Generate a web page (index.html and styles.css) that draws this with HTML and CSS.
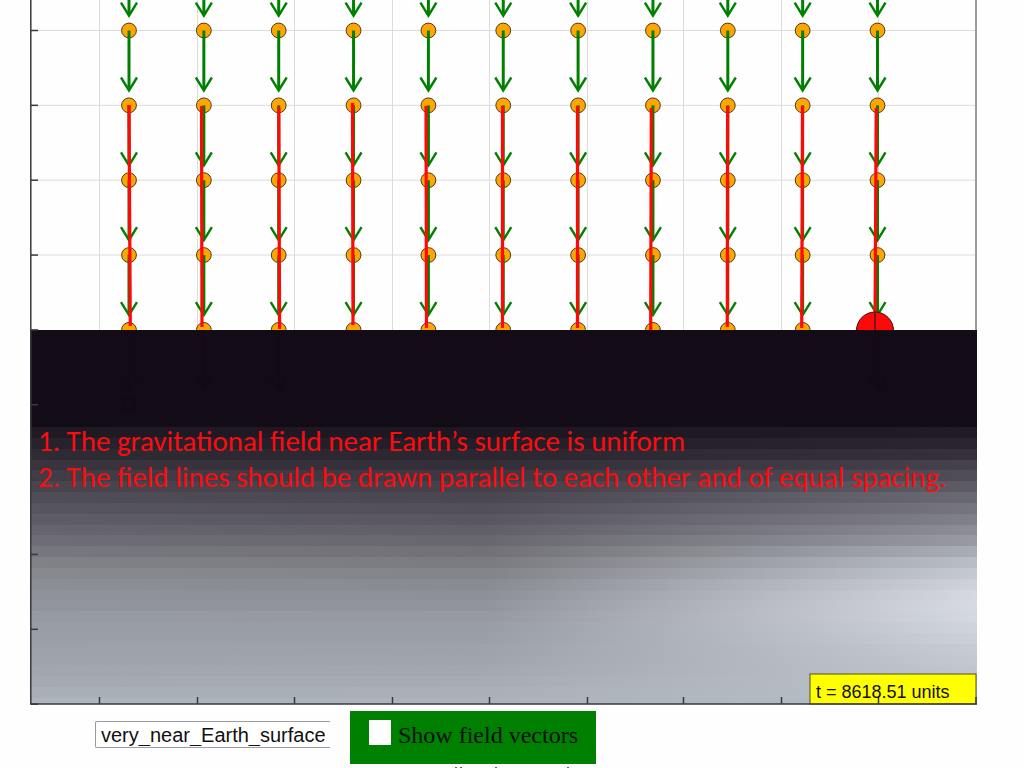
FILE: index.html
```html
<!DOCTYPE html>
<html lang="en">
<head>
<meta charset="utf-8">
<title>Gravitational field near Earth's surface</title>
<link rel="stylesheet" href="styles.css">
</head>
<body>
<main class="simulation">
  <svg class="plot" viewBox="30 0 947 705" role="img" aria-label="Gravitational field plot">
    <defs id="defs">
      <clipPath id="sky"><rect x="30" y="0" width="947" height="330"/></clipPath>
    </defs>
    <g id="grid" class="grid"></g>
    <g id="field" clip-path="url(#sky)"></g>
    <rect class="ground" x="30" y="330" width="947" height="98"/>
    <g id="bands" shape-rendering="crispEdges"></g>
    <g id="buried" class="buried"></g>
    <path class="edge" d="M976 0V330"/>
    <rect class="time-box" x="810" y="674" width="166" height="30"/>
    <g id="ticks" class="axis"></g>
    <path class="axis" d="M30.8 0V704H977"/>
    <text class="note" x="38" y="451">1. The gravitational field near Earth’s surface is uniform</text>
    <text class="note" x="38" y="487">2. The field lines should be drawn parallel to each other and of equal spacing.</text>
    <text class="time" x="816" y="698">t = 8618.51 units</text>
  </svg>
  <form class="controls">
    <select class="scenario" aria-label="Scenario">
      <option>very_near_Earth_surface</option>
    </select>
    <label class="toggle"><input class="tick" type="checkbox"><span>Show field vectors</span></label>
  </form>
  <svg class="marks" viewBox="0 0 1024 4" aria-hidden="true"><path d="M455 3.5h2M460 3.5h2M495 3.5h2M567 3.5h2"/></svg>
</main>
<script src="plot.js"></script>
</body>
</html>
```
FILE: styles.css
```css
body {
  margin: 0;
  background: #fefefe;
}

.simulation {
  overflow: hidden;
}

.plot {
  display: block;
  width: auto;
  margin: 0 47px 0 30px;
}

.grid {
  stroke: #dcdcdc;
  stroke-width: 1;
  fill: none;
}

.axis {
  stroke: #3b3840;
  stroke-width: 1.5;
  fill: none;
}

.edge {
  stroke: #9b9b9f;
  stroke-width: 2;
}

.dot {
  fill: #ffa500;
  stroke: #4b3b20;
  stroke-width: 1;
}

.shaft {
  stroke: #008000;
  stroke-width: 3;
  fill: none;
}

.head {
  stroke: #008000;
  stroke-width: 2.4;
  fill: none;
}

.trail {
  stroke: #ff0808;
  stroke-width: 3.2;
}

.ball {
  fill: #ff0808;
  stroke: #301010;
  stroke-width: 1;
}

.radius {
  stroke: #801018;
  stroke-width: 2;
}

.ground {
  fill: #130c17;
}

.buried {
  opacity: 0.35;
  stroke: #080714;
  stroke-width: 2;
  fill: none;
}

.time-box {
  fill: #ffff00;
  stroke: #55551c;
  stroke-width: 1;
}

.note {
  fill: #fa0c10;
  font: 29px Carlito, Lato, sans-serif;
}

.time {
  fill: #111111;
  font: 18px "Liberation Sans", Arial, sans-serif;
}

.controls {
  display: flex;
  align-items: center;
  gap: 20px;
  margin: 6px 0 0 95px;
}

.scenario {
  appearance: none;
  box-sizing: border-box;
  width: 235px;
  height: 27px;
  margin: 0 0 6px;
  padding: 0 0 0 5px;
  border: 1px solid #9a9aa8;
  border-right: 0;
  border-radius: 2px 0 0 2px;
  background: #ffffff;
  color: #111111;
  font: 20px "Liberation Sans", Arial, sans-serif;
}

.toggle {
  display: flex;
  align-items: center;
  gap: 7px;
  box-sizing: border-box;
  height: 53px;
  padding: 0 18px 4px 19px;
  background: #008000;
  color: #061006;
  font: 24px "Liberation Serif", "Times New Roman", serif;
}

.tick {
  appearance: none;
  width: 22px;
  height: 25px;
  margin: 0 0 6px;
  background: #ffffff;
}

.tick:checked {
  background: #222222;
}

.marks {
  display: block;
  width: 100%;
  stroke: #8a5048;
  stroke-width: 1;
}
```
FILE: plot.js
```javascript
const NS = "http://www.w3.org/2000/svg";

function add(parent, name, attrs) {
  const node = document.createElementNS(NS, name);
  for (const key in attrs) node.setAttribute(key, attrs[key]);
  parent.appendChild(node);
  return node;
}

const byId = (id) => document.getElementById(id);
const grid = byId("grid");
const ticks = byId("ticks");
const field = byId("field");
const buried = byId("buried");

const columns = [99.5, 197.5, 294.5, 392.5, 489.5, 587.5, 683.5, 781.5, 878.5, 976];
for (const x of columns) {
  if (x < 976) add(grid, "path", { d: `M${x} 0V330` });
  add(ticks, "path", { d: `M${x} 697V704` });
}
for (let i = 0; i < 10; i++) {
  const y = 30.5 + i * 74.85;
  if (y < 329) add(grid, "path", { d: `M31 ${y}H976` });
  add(ticks, "path", { d: `M31 ${y}h7` });
}

// Path of each falling ball: top x, top y, bottom x, bottom y
const trails = [
  [129, 105, 130.3, 326], [201.5, 106, 202, 327], [278.8, 107, 279.6, 329],
  [352.5, 103, 353, 325], [426, 106, 426.5, 328], [502.5, 106, 502.5, 328],
  [577.5, 106, 577.5, 328], [651.3, 108, 650.7, 330], [727.6, 106, 727.3, 327],
  [802.5, 106, 801.7, 328], [876.2, 108, 875, 330]
];

const positions = trails.map((_, i) => 129 + i * 74.85);
for (const x of positions) {
  for (let row = -1; row < 5; row++) {
    const y = 30.5 + row * 74.85;
    add(field, "circle", { class: "dot", cx: x, cy: y, r: 7.4 });
    if (row < 4) {
      add(field, "path", { class: "shaft", d: `M${x} ${y}V${y + 59}` });
      add(field, "path", { class: "head", d: `M${x - 8} ${y + 47}L${x} ${y + 60}L${x + 8} ${y + 47}` });
    }
  }
}
for (const [x1, y1, x2, y2] of trails) {
  add(field, "line", { class: "trail", x1, y1, x2, y2 });
}
add(field, "circle", { class: "ball", cx: 875, cy: 330.5, r: 18.5 });
add(field, "path", { class: "radius", d: "M875 312V331" });

for (const x of [positions[0], positions[1], positions[2], positions[10]]) {
  add(buried, "path", { "stroke-dasharray": "1 1", d: `M${x} 332V390M${x - 8} 377L${x} 390L${x + 8} 377` });
}
add(buried, "circle", { cx: 129, cy: 404.5, r: 6 });

// Colour samples down the horizon image: y, left, middle, right
const samples = [
  [427, [27, 21, 32], [26, 20, 30], [29, 22, 32]],
  [440, [38, 32, 42], [32, 26, 36], [39, 34, 43]],
  [452, [45, 41, 51], [42, 36, 46], [50, 45, 56]],
  [465, [57, 52, 61], [51, 47, 57], [70, 66, 76]],
  [480, [68, 64, 73], [65, 58, 68], [85, 82, 91]],
  [497, [80, 77, 86], [75, 71, 80], [106, 105, 114]],
  [518, [93, 91, 99], [88, 85, 94], [127, 127, 136]],
  [540, [109, 108, 116], [103, 102, 109], [151, 153, 160]],
  [560, [126, 128, 134], [120, 121, 126], [182, 187, 194]],
  [580, [139, 141, 148], [134, 137, 143], [205, 208, 216]],
  [600, [144, 147, 154], [143, 146, 152], [216, 219, 227]],
  [620, [151, 155, 162], [151, 155, 162], [211, 215, 222]],
  [650, [157, 161, 168], [158, 162, 169], [199, 203, 210]],
  [680, [164, 169, 176], [165, 171, 178], [190, 196, 203]],
  [704, [173, 181, 189], [172, 180, 187], [182, 190, 197]]
];

function colourAt(y, side) {
  let i = 0;
  while (i < samples.length - 2 && samples[i + 1][0] < y) i++;
  const a = samples[i];
  const b = samples[i + 1];
  const t = Math.min(1, Math.max(0, (y - a[0]) / (b[0] - a[0])));
  return `rgb(${a[side].map((v, k) => Math.round(v + (b[side][k] - v) * t)).join(",")})`;
}

const step = 10.84;
for (let n = 0, y = 427; y < 704; n++, y += step) {
  const gradient = add(byId("defs"), "linearGradient", { id: `band${n}` });
  const middleY = Math.min(704, y + step / 2);
  add(gradient, "stop", { offset: 0, "stop-color": colourAt(middleY, 1) });
  add(gradient, "stop", { offset: 0.48, "stop-color": colourAt(middleY, 2) });
  add(gradient, "stop", { offset: 1, "stop-color": colourAt(middleY, 3) });
  add(byId("bands"), "rect", {
    x: 30, y, width: 947, height: Math.min(step + 0.5, 704 - y), fill: `url(#band${n})`
  });
}
```
